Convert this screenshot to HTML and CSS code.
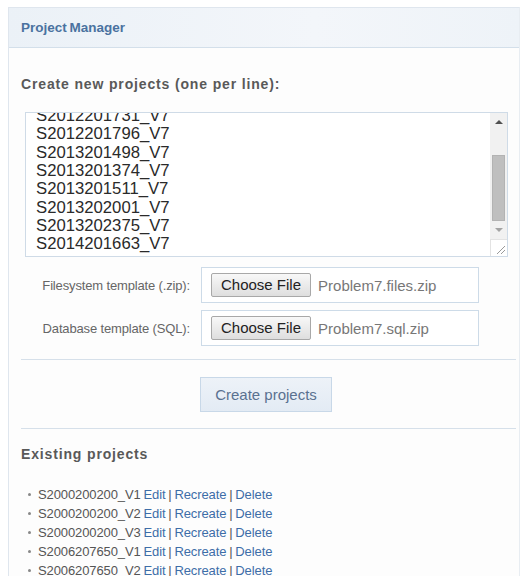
FILE: index.html
```html
<!DOCTYPE html>
<html lang="en">
<head>
<meta charset="utf-8">
<title>Project Manager</title>
<link rel="stylesheet" href="styles.css">
</head>
<body>
<div class="panel">
  <div class="panel-head">Project Manager</div>
  <div class="panel-body">
    <h3 class="section-title">Create new projects (one per line):</h3>

    <div class="textarea">
      <div class="ta-text">
        <div class="ta-lines">S2012201731_V7
S2012201796_V7
S2013201498_V7
S2013201374_V7
S2013201511_V7
S2013202001_V7
S2013202375_V7
S2014201663_V7</div>
      </div>
      <div class="ta-side">
        <div class="sb">
          <div class="sb-btn"><span class="arrow-up"></span></div>
          <div class="sb-track"><div class="sb-thumb"></div></div>
          <div class="sb-btn"><span class="arrow-down"></span></div>
        </div>
        <div class="grip">
          <svg width="16" height="16" viewBox="0 0 16 16">
            <path d="M6 14 L14 6 M10 14 L14 10" stroke="#9a9a9a" stroke-width="1" fill="none"/>
          </svg>
        </div>
      </div>
    </div>

    <div class="file-row">
      <span class="file-label">Filesystem template (.zip):</span>
      <div class="file-box">
        <span class="file-btn">Choose File</span>
        <span class="file-name">Problem7.files.zip</span>
      </div>
    </div>
    <div class="file-row">
      <span class="file-label">Database template (SQL):</span>
      <div class="file-box">
        <span class="file-btn">Choose File</span>
        <span class="file-name">Problem7.sql.zip</span>
      </div>
    </div>

    <hr class="rule">
    <div class="actions">
      <button class="btn-create">Create projects</button>
    </div>
    <hr class="rule">

    <h3 class="section-title existing">Existing projects</h3>
    <ul class="projects">
      <li><span class="pname">S2000200200_V1</span> <a href="#">Edit</a> | <a href="#">Recreate</a> | <a href="#">Delete</a></li>
      <li><span class="pname">S2000200200_V2</span> <a href="#">Edit</a> | <a href="#">Recreate</a> | <a href="#">Delete</a></li>
      <li><span class="pname">S2000200200_V3</span> <a href="#">Edit</a> | <a href="#">Recreate</a> | <a href="#">Delete</a></li>
      <li><span class="pname">S2006207650_V1</span> <a href="#">Edit</a> | <a href="#">Recreate</a> | <a href="#">Delete</a></li>
      <li><span class="pname">S2006207650_V2</span> <a href="#">Edit</a> | <a href="#">Recreate</a> | <a href="#">Delete</a></li>
    </ul>
  </div>
</div>
</body>
</html>
```

FILE: styles.css
```css
html, body {
  margin: 0;
  padding: 0;
  background: #ffffff;
  font-family: "Liberation Sans", Arial, sans-serif;
  color: #555;
  overflow: hidden;
}

.panel {
  margin: 7px 1px 0 8px;
  border-left: 1px solid #dfe6ee;
  border-top: 1px solid #dfe6ee;
  border-right: 1px solid #e8edf2;
  background: #fdfdfd;
}

.panel-head {
  height: 39px;
  line-height: 39px;
  padding-left: 12px;
  background: linear-gradient(to right, #ebf1f7, #f3f6fa 60%, #eef3f8);
  border-bottom: 1px solid #d3dfea;
  color: #4a72a0;
  font-weight: bold;
  font-size: 13.5px;
  word-spacing: -1px;
}

.panel-body {
  padding: 0 3px 0 12px;
}

.section-title {
  margin: 0;
  padding-top: 27px;
  font-size: 14px;
  line-height: 18px;
  font-weight: bold;
  letter-spacing: 0.85px;
  color: #595959;
}

/* textarea look-alike */
.textarea {
  display: flex;
  margin: 19px 8px 0 4px;
  height: 143px;
  border: 1px solid #cfdbe7;
  background: #fff;
}

.ta-text {
  flex: 1;
  overflow: hidden;
  padding-left: 10px;
}

.ta-lines {
  margin-top: -6px;
  white-space: pre;
  font-size: 16.7px;
  line-height: 18.33px;
  color: #2a2a2a;
}

.ta-side {
  width: 17px;
  display: flex;
  flex-direction: column;
}

.sb {
  flex: 1;
  display: flex;
  flex-direction: column;
  background: #f1f1f1;
}

.sb-btn {
  height: 18px;
  display: flex;
  align-items: center;
  justify-content: center;
}

.arrow-up {
  width: 0;
  height: 0;
  border-left: 4px solid transparent;
  border-right: 4px solid transparent;
  border-bottom: 4px solid #505050;
}

.arrow-down {
  width: 0;
  height: 0;
  border-left: 4px solid transparent;
  border-right: 4px solid transparent;
  border-top: 4px solid #a3a3a3;
}

.sb-track {
  flex: 1;
  display: flex;
  flex-direction: column;
  justify-content: flex-end;
  padding: 0 2px 0 2px;
}

.sb-thumb {
  height: 64px;
  background: #bfbfbf;
  border: 1px solid #b3b3b3;
}

.grip {
  height: 16px;
  border-top: 1px solid #e3e3e3;
  border-left: 1px solid #e3e3e3;
  background: #fff;
}

.grip svg {
  display: block;
}

/* file inputs */
.file-row {
  display: flex;
  align-items: center;
  margin-top: 7px;
}

.textarea + .file-row {
  margin-top: 10px;
}

.file-label {
  width: 169px;
  text-align: right;
  font-size: 13px;
  letter-spacing: -0.15px;
  color: #666;
  padding-right: 11px;
}

.file-box {
  box-sizing: border-box;
  width: 278px;
  height: 36px;
  border: 1px solid #cddbe8;
  background: #fff;
  display: flex;
  align-items: center;
  padding-left: 9px;
}

.file-btn {
  height: 22px;
  line-height: 22px;
  padding: 0 9px;
  border: 1px solid #a8a8a8;
  border-radius: 2px;
  background: linear-gradient(#f8f8f8, #dedede);
  font-size: 15px;
  color: #222;
}

.file-name {
  margin-left: 7px;
  font-size: 15px;
  color: #777;
}

.rule {
  border: 0;
  height: 1px;
  background: #d6e0ea;
  margin: 13px 0 0 0;
}

.actions {
  padding: 17px 0 16px 179px;
}

.btn-create {
  display: block;
  width: 132px;
  height: 35px;
  border: 1px solid #c8d8e8;
  background: linear-gradient(#edf2f8, #e3ebf4);
  font-family: "Liberation Sans", Arial, sans-serif;
  font-size: 15px;
  color: #5a7190;
  padding: 0;
}

.actions + .rule {
  margin-top: 0;
}

.existing {
  padding-top: 16px;
}

.projects {
  list-style: none;
  margin: 22px 0 0 0;
  padding: 0 0 0 7px;
  font-size: 13px;
  line-height: 19px;
  letter-spacing: -0.1px;
  word-spacing: -0.7px;
}

.projects li {
  position: relative;
  padding-left: 10px;
  white-space: nowrap;
}

.projects li::before {
  content: "";
  position: absolute;
  left: 0;
  top: 8px;
  width: 3px;
  height: 3px;
  border-radius: 50%;
  background: #888;
}

.pname {
  color: #555;
}

.projects a {
  color: #3d6da8;
  text-decoration: none;
}
```
